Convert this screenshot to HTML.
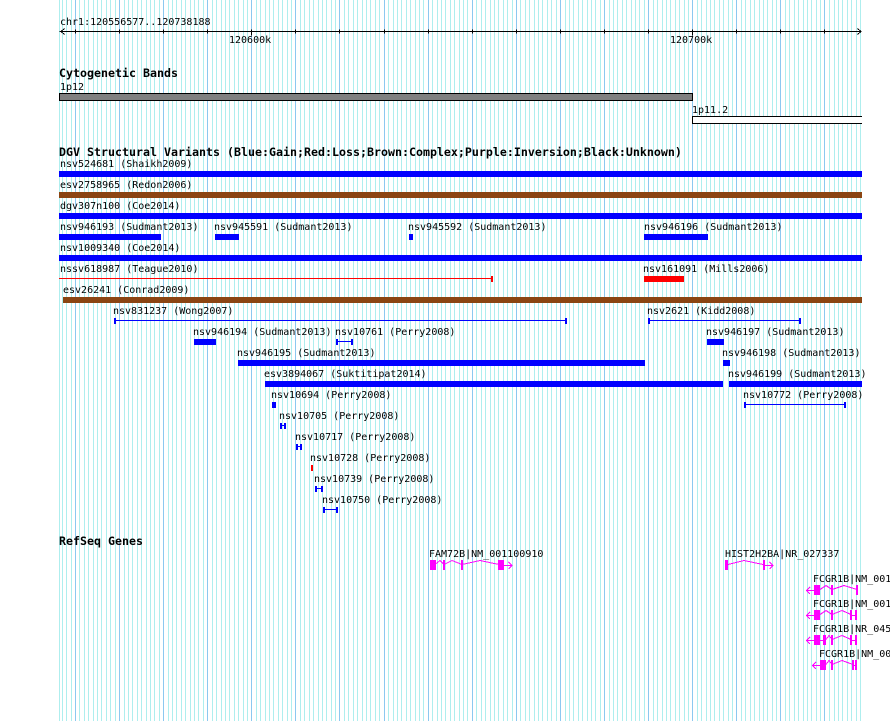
<!DOCTYPE html>
<html><head><meta charset="utf-8"><title>GBrowse</title>
<style>
html,body{margin:0;padding:0;background:#fff;width:890px;height:721px;overflow:hidden}
svg{display:block;position:absolute;left:0;top:0}
text{font-family:"DejaVu Sans Mono","Liberation Mono",monospace;font-size:10px;fill:#000}
text.b{font-weight:bold;font-size:11.63px}
</style></head><body>
<svg width="890" height="721" viewBox="0 0 890 721" xmlns="http://www.w3.org/2000/svg">
<g transform="translate(.5,0)" fill="none" shape-rendering="crispEdges">
<path stroke="#aeeeee" d="M59 0v721M62 0v721M66 0v721M71 0v721M79 0v721M84 0v721M88 0v721M93 0v721M97 0v721M101 0v721M106 0v721M110 0v721M115 0v721M124 0v721M128 0v721M132 0v721M137 0v721M141 0v721M146 0v721M150 0v721M154 0v721M159 0v721M168 0v721M172 0v721M176 0v721M181 0v721M185 0v721M190 0v721M194 0v721M198 0v721M203 0v721M212 0v721M216 0v721M221 0v721M225 0v721M229 0v721M234 0v721M238 0v721M243 0v721M247 0v721M256 0v721M260 0v721M265 0v721M269 0v721M273 0v721M278 0v721M282 0v721M287 0v721M291 0v721M300 0v721M304 0v721M309 0v721M313 0v721M318 0v721M322 0v721M326 0v721M331 0v721M335 0v721M344 0v721M348 0v721M353 0v721M357 0v721M362 0v721M366 0v721M370 0v721M375 0v721M379 0v721M388 0v721M393 0v721M397 0v721M401 0v721M406 0v721M410 0v721M415 0v721M419 0v721M423 0v721M432 0v721M437 0v721M441 0v721M445 0v721M450 0v721M454 0v721M459 0v721M463 0v721M467 0v721M476 0v721M481 0v721M485 0v721M490 0v721M494 0v721M498 0v721M503 0v721M507 0v721M512 0v721M520 0v721M525 0v721M529 0v721M534 0v721M538 0v721M542 0v721M547 0v721M551 0v721M556 0v721M565 0v721M569 0v721M573 0v721M578 0v721M582 0v721M587 0v721M591 0v721M595 0v721M600 0v721M609 0v721M613 0v721M617 0v721M622 0v721M626 0v721M631 0v721M635 0v721M639 0v721M644 0v721M653 0v721M657 0v721M662 0v721M666 0v721M670 0v721M675 0v721M679 0v721M684 0v721M688 0v721M697 0v721M701 0v721M706 0v721M710 0v721M714 0v721M719 0v721M723 0v721M728 0v721M732 0v721M741 0v721M745 0v721M750 0v721M754 0v721M759 0v721M763 0v721M767 0v721M772 0v721M776 0v721M785 0v721M789 0v721M794 0v721M798 0v721M803 0v721M807 0v721M811 0v721M816 0v721M820 0v721M829 0v721M834 0v721M838 0v721M842 0v721M847 0v721M851 0v721M856 0v721M860 0v721"/>
<path stroke="#8cc8f0" d="M75 0v721M119 0v721M163 0v721M207 0v721M251 0v721M295 0v721M339 0v721M384 0v721M428 0v721M472 0v721M516 0v721M560 0v721M604 0v721M648 0v721M692 0v721M736 0v721M780 0v721M824 0v721"/>
</g>

<!-- ruler -->
<text x="60" y="25">chr1:120556577..120738188</text>
<g transform="translate(.5,.5)" fill="none" stroke="#000" shape-rendering="crispEdges">
<path d="M59 31H861M75 29v4M119 29v4M163 29v4M207 29v4M251 29v6M295 29v4M339 29v4M384 29v4M428 29v4M472 29v4M516 29v4M560 29v4M604 29v4M648 29v4M692 29v6M736 29v4M780 29v4M824 29v4"/>
</g>
<path d="M64.5 28.5L61 31.5L64.5 34.5M857.5 28.5L861 31.5L857.5 34.5" fill="none" stroke="#000" shape-rendering="crispEdges"/>
<text x="229" y="43">120600k</text>
<text x="670" y="43">120700k</text>

<!-- cytobands -->
<text class="b" x="59" y="77">Cytogenetic Bands</text>
<text x="60" y="90">1p12</text>
<rect x="59.5" y="93.5" width="633" height="7" fill="#808080" stroke="#000" shape-rendering="crispEdges"/>
<text x="692" y="113">1p11.2</text>
<rect x="692.5" y="116.5" width="180" height="7" fill="#fff" stroke="#000" shape-rendering="crispEdges"/>
<rect x="862" y="110" width="28" height="20" fill="#fff"/>

<!-- DGV -->
<text class="b" x="59" y="156">DGV Structural Variants (Blue:Gain;Red:Loss;Brown:Complex;Purple:Inversion;Black:Unknown)</text>
<text x="60" y="167">nsv524681 (Shaikh2009)</text>
<text x="60" y="188">esv2758965 (Redon2006)</text>
<text x="60" y="209">dgv307n100 (Coe2014)</text>
<text x="60" y="230">nsv946193 (Sudmant2013)</text>
<text x="214" y="230">nsv945591 (Sudmant2013)</text>
<text x="408" y="230">nsv945592 (Sudmant2013)</text>
<text x="644" y="230">nsv946196 (Sudmant2013)</text>
<text x="60" y="251">nsv1009340 (Coe2014)</text>
<text x="60" y="272">nssv618987 (Teague2010)</text>
<text x="643" y="272">nsv161091 (Mills2006)</text>
<text x="63" y="293">esv26241 (Conrad2009)</text>
<text x="113" y="314">nsv831237 (Wong2007)</text>
<text x="647" y="314">nsv2621 (Kidd2008)</text>
<text x="193" y="335">nsv946194 (Sudmant2013)</text>
<text x="335" y="335">nsv10761 (Perry2008)</text>
<text x="706" y="335">nsv946197 (Sudmant2013)</text>
<text x="237" y="356">nsv946195 (Sudmant2013)</text>
<text x="722" y="356">nsv946198 (Sudmant2013)</text>
<text x="264" y="377">esv3894067 (Suktitipat2014)</text>
<text x="728" y="377">nsv946199 (Sudmant2013)</text>
<text x="271" y="398">nsv10694 (Perry2008)</text>
<text x="743" y="398">nsv10772 (Perry2008)</text>
<text x="279" y="419">nsv10705 (Perry2008)</text>
<text x="295" y="440">nsv10717 (Perry2008)</text>
<text x="310" y="461">nsv10728 (Perry2008)</text>
<text x="314" y="482">nsv10739 (Perry2008)</text>
<text x="322" y="503">nsv10750 (Perry2008)</text>

<g shape-rendering="crispEdges">
<g fill="#0000ff">
<rect x="59" y="171" width="803" height="6"/>
<rect x="59" y="213" width="803" height="6"/>
<rect x="59" y="234" width="102" height="6"/>
<rect x="215" y="234" width="24" height="6"/>
<rect x="409" y="234" width="4" height="6"/>
<rect x="644" y="234" width="64" height="6"/>
<rect x="59" y="255" width="803" height="6"/>
<rect x="194" y="339" width="22" height="6"/>
<rect x="707" y="339" width="17" height="6"/>
<rect x="238" y="360" width="407" height="6"/>
<rect x="723" y="360" width="7" height="6"/>
<rect x="265" y="381" width="458" height="6"/>
<rect x="729" y="381" width="133" height="6"/>
<rect x="272" y="402" width="4" height="6"/>
<!-- thin spans -->
<rect x="114" y="320" width="453" height="1"/><rect x="114" y="318" width="2" height="6"/><rect x="565" y="318" width="2" height="6"/>
<rect x="648" y="320" width="153" height="1"/><rect x="648" y="318" width="2" height="6"/><rect x="799" y="318" width="2" height="6"/>
<rect x="336" y="341" width="17" height="1"/><rect x="336" y="339" width="2" height="6"/><rect x="351" y="339" width="2" height="6"/>
<rect x="744" y="404" width="102" height="1"/><rect x="744" y="402" width="2" height="6"/><rect x="844" y="402" width="2" height="6"/>
<rect x="280" y="425" width="6" height="1"/><rect x="280" y="423" width="2" height="6"/><rect x="284" y="423" width="2" height="6"/>
<rect x="296" y="446" width="6" height="1"/><rect x="296" y="444" width="2" height="6"/><rect x="300" y="444" width="2" height="6"/>
<rect x="315" y="488" width="8" height="1"/><rect x="315" y="486" width="2" height="6"/><rect x="321" y="486" width="2" height="6"/>
<rect x="323" y="509" width="15" height="1"/><rect x="323" y="507" width="2" height="6"/><rect x="336" y="507" width="2" height="6"/>
</g>
<g fill="#8b4513">
<rect x="59" y="192" width="803" height="6"/>
<rect x="63" y="297" width="799" height="6"/>
</g>
<g fill="#ff0000">
<rect x="59" y="278" width="434" height="1"/><rect x="491" y="276" width="2" height="6"/>
<rect x="644" y="276" width="40" height="6"/>
<rect x="311" y="465" width="2" height="6"/>
</g>
</g>

<!-- RefSeq -->
<text class="b" x="59" y="545">RefSeq Genes</text>
<text x="429" y="557">FAM72B|NM_001100910</text>
<text x="725" y="557">HIST2H2BA|NR_027337</text>
<text x="813" y="582">FCGR1B|NM_001017986</text>
<text x="813" y="607">FCGR1B|NM_001244910</text>
<text x="813" y="632">FCGR1B|NR_045213</text>
<text x="819" y="657">FCGR1B|NM_000566</text>

<g fill="none" stroke="#ff00ff" shape-rendering="crispEdges">
<path d="M435 564.5L440 560.5L444 564.5L452 560.5L462 564.5L480 560.5L499 564.5"/>
<path d="M503 565.5H512M508.5 562L512 565.5L508.5 569"/>
<path d="M728 564.5L744 560.5L763 564.5"/>
<path d="M765 565.5H773M769.5 562L773 565.5L769.5 569"/>
<path d="M814 590.5H806.5M810 587L806.5 590.5L810 594M820 589.5L826 585.5L832 589.5L844 585.5L857 589.5"/>
<path d="M814 615.5H806.5M810 612L806.5 615.5L810 619M820 614.5L826 610.5L832 614.5L842 610.5L851 614.5M851 615.5H856"/>
<path d="M814 640.5H806.5M810 637L806.5 640.5L810 644M820 640.5H823M826 639.5L829 635.5L832 639.5L842 635.5L851 639.5M851 640.5H856"/>
<path d="M820 665.5H812.5M816 662L812.5 665.5L816 669M826 664.5L829 660.5L832 664.5L842 660.5L853 664.5M853 665.5H856"/>
</g>
<g fill="#ff00ff" shape-rendering="crispEdges">
<rect x="430" y="560" width="6" height="10"/><rect x="443" y="560" width="2" height="10"/><rect x="461" y="560" width="2" height="10"/><rect x="498" y="560" width="6" height="10"/>
<rect x="725" y="560" width="3" height="10"/><rect x="763" y="560" width="2" height="10"/>
<rect x="814" y="585" width="6" height="10"/><rect x="831" y="585" width="2" height="10"/><rect x="856" y="585" width="2" height="10"/>
<rect x="814" y="610" width="6" height="10"/><rect x="831" y="610" width="2" height="10"/><rect x="850" y="610" width="2" height="10"/><rect x="855" y="610" width="2" height="10"/>
<rect x="814" y="635" width="6" height="10"/><rect x="823" y="635" width="3" height="10"/><rect x="831" y="635" width="2" height="10"/><rect x="850" y="635" width="2" height="10"/><rect x="855" y="635" width="2" height="10"/>
<rect x="820" y="660" width="6" height="10"/><rect x="831" y="660" width="2" height="10"/><rect x="852" y="660" width="2" height="10"/><rect x="855" y="660" width="2" height="10"/>
</g>
</svg>
</body></html>
